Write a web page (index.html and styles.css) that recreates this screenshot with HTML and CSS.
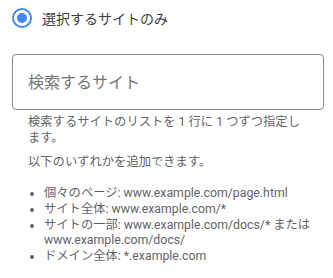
FILE: index.html
```html
<!DOCTYPE html>
<html lang="ja">
<head>
<meta charset="UTF-8" />
<meta name="viewport" content="width=device-width, initial-scale=1" />
<title>検索するサイト</title>
<link rel="stylesheet" href="styles.css">
</head>
<body>

<label class="option">
  <span class="radio checked"></span>
  <span class="option-label">選択するサイトのみ</span>
</label>

<div class="field">
  <input type="text" class="site-input" placeholder="検索するサイト">
</div>

<div class="help">
  <p class="help-first">検索するサイトのリストを 1 行に 1 つずつ指定します。</p>
  <p class="help-second">以下のいずれかを追加できます。</p>
  <ul>
    <li>個々のページ: www.example.com/page.html</li>
    <li>サイト全体: www.example.com/*</li>
    <li>サイトの一部: www.example.com/docs/* または www.example.com/docs/</li>
    <li>ドメイン全体: *.example.com</li>
  </ul>
</div>

</body>
</html>
```

FILE: styles.css
```css
/* Reset */
*, *::before, *::after {
  margin: 0; padding: 0; box-sizing: border-box;
}
html, body {
  height: 100%;
  font-family: Roboto, "Noto Sans CJK JP", sans-serif;
  background-color: #fff;
  color: #202124;
}

.option {
  display: flex;
  align-items: center;
  gap: 10px;
  padding: 8px 12px 0;
  height: 28px;
}
.radio {
  flex: 0 0 20px;
  width: 20px;
  height: 20px;
  border: 2px solid #4285f4;
  border-radius: 50%;
  display: flex;
  align-items: center;
  justify-content: center;
}
.radio.checked::after {
  content: "";
  width: 10px;
  height: 10px;
  border-radius: 50%;
  background: #4285f4;
}
.option-label {
  font-size: 14px;
  color: #3c4043;
}

.field {
  padding: 26px 9px 0 12px;
}
.site-input {
  display: block;
  width: 312px;
  height: 56px;
  border: 1px solid #80868b;
  border-radius: 4px;
  padding: 0 15px;
  font-family: inherit;
  font-size: 16px;
  color: #202124;
  outline: none;
}
.site-input::placeholder {
  color: #757575;
}

.help {
  width: 312px;
  margin-left: 12px;
  padding: 4px 4px 0 16px;
  font-size: 12.3px;
  line-height: 16px;
  color: #5f6368;
}
.help-first {
  padding-right: 12px;
  margin-bottom: 8px;
}
.help-second {
  margin-bottom: 16px;
}
.help ul {
  padding-left: 16px;
  line-height: 15.75px;
}
```
